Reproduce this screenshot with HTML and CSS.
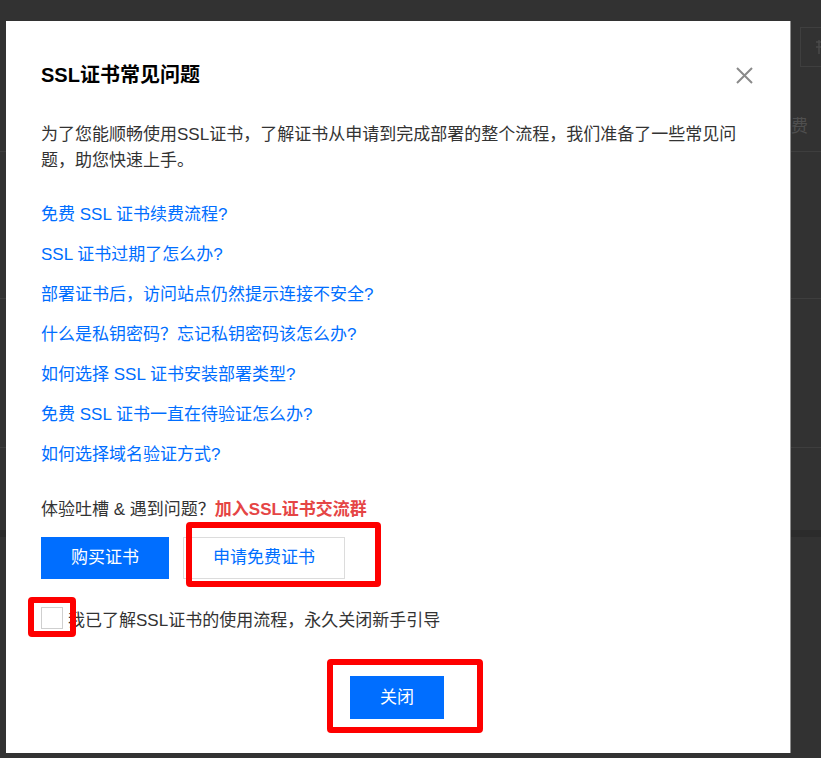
FILE: index.html
```html
<!DOCTYPE html>
<html lang="zh-CN">
<head>
<meta charset="utf-8">
<title>SSL证书常见问题</title>
<link rel="stylesheet" href="styles.css">
</head>
<body>
<div class="page">
  <div class="page-head">
    <div class="page-tool">
      <svg class="page-tool-icon" viewBox="0 0 8 16" aria-hidden="true">
        <path d="M1 3H8M4 1V15M1 8H8" stroke="#4a4a4a" stroke-width="1.5" fill="none"/>
      </svg>
    </div>
  </div>
  <div class="page-row row-a"><span class="page-cell">费</span></div>
  <div class="page-row row-b"></div>
  <div class="page-row row-c"></div>
  <div class="page-gap"></div>
  <div class="page-band"></div>
</div>

<div class="modal" role="dialog">
  <div class="modal-head">
    <h2 class="modal-title">SSL证书常见问题</h2>
    <svg class="close-icon" viewBox="0 0 17 17" aria-label="关闭">
      <path d="M1 1L16 16M16 1L1 16" stroke="#8a8a8a" stroke-width="2" fill="none"/>
    </svg>
  </div>
  <p class="intro">为了您能顺畅使用SSL证书，了解证书从申请到完成部署的整个流程，我们准备了一些常见问题，助您快速上手。</p>
  <ul class="faq">
    <li><a href="#">免费 SSL 证书续费流程?</a></li>
    <li><a href="#">SSL 证书过期了怎么办?</a></li>
    <li><a href="#">部署证书后，访问站点仍然提示连接不安全?</a></li>
    <li><a href="#">什么是私钥密码？忘记私钥密码该怎么办?</a></li>
    <li><a href="#">如何选择 SSL 证书安装部署类型?</a></li>
    <li><a href="#">免费 SSL 证书一直在待验证怎么办?</a></li>
    <li><a href="#">如何选择域名验证方式?</a></li>
  </ul>
  <p class="feedback">体验吐槽 &amp; 遇到问题？<strong>加入SSL证书交流群</strong></p>
  <div class="actions">
    <button class="btn btn-primary">购买证书</button>
    <button class="btn btn-default">申请免费证书</button>
  </div>
  <label class="agree"><span class="checkbox"></span>我已了解SSL证书的使用流程，永久关闭新手引导</label>
  <div class="footer">
    <button class="btn btn-primary btn-close">关闭</button>
  </div>
</div>

<div class="mark mark-free"></div>
<div class="mark mark-check"></div>
<div class="mark mark-close"></div>
</body>
</html>
```

FILE: styles.css
```css
* { box-sizing: border-box; }

html, body {
  margin: 0;
  padding: 0;
}

body {
  position: relative;
  width: 821px;
  height: 758px;
  overflow: hidden;
  background: #323232;
  font-family: "Liberation Sans", "Noto Sans CJK SC", sans-serif;
}

/* dimmed page behind the overlay */
.page {
  display: flex;
  flex-direction: column;
  width: 821px;
}

.page-head {
  height: 97px;
  display: flex;
  justify-content: flex-end;
  padding-top: 27px;
  margin-right: -40px;
}

.page-tool {
  width: 61px;
  height: 40px;
  border: 1px solid #3f3f3f;
  display: flex;
  align-items: center;
  padding-left: 14px;
}

.page-tool-icon {
  width: 8px;
  height: 16px;
}

.page-row {
  border-bottom: 1px solid #3e3e3e;
  display: flex;
  align-items: center;
  justify-content: flex-end;
}

.row-a { height: 55px; }
.row-b { height: 147px; }
.row-c { height: 149px; }
.page-gap { height: 82px; }
.page-band { height: 7px; background: #2b2b2b; }

.page-cell {
  color: #4f4f4f;
  font-size: 17px;
  padding-right: 13px;
}

/* modal */
.modal {
  position: absolute;
  left: 6px;
  top: 21px;
  width: 784px;
  height: 732px;
  background: #fff;
  padding: 40px 37px 34px 35px;
  display: flex;
  flex-direction: column;
  box-shadow: 1px 0 0 #8e8e8e;
}

.modal-head {
  display: flex;
  justify-content: space-between;
  align-items: center;
  height: 28px;
}

.modal-title {
  margin: 0;
  font-size: 20px;
  line-height: 28px;
  font-weight: bold;
  color: #000;
}

.close-icon {
  width: 17px;
  height: 17px;
}

.intro {
  margin: 33px 0 0;
  max-width: 704px;
  font-size: 17px;
  line-height: 26px;
  color: #333;
}

.faq {
  list-style: none;
  margin: 21px 0 0;
  padding: 0;
}

.faq a {
  display: block;
  font-size: 17px;
  line-height: 40px;
  color: #006eff;
  text-decoration: none;
}

.feedback {
  margin: 22px 0 0;
  font-size: 17px;
  line-height: 26px;
  color: #333;
}

.feedback strong {
  color: #e54545;
  font-weight: bold;
}

.actions {
  display: flex;
  gap: 14px;
  margin-top: 14px;
}

.btn {
  height: 42px;
  padding: 0 29px;
  border: 1px solid;
  border-radius: 0;
  font: inherit;
  font-size: 17px;
  line-height: 40px;
  cursor: pointer;
}

.btn-primary {
  background: #006eff;
  border-color: #006eff;
  color: #fff;
}

.btn-default {
  background: #fff;
  border-color: #dcdcdc;
  color: #006eff;
}

.agree {
  display: flex;
  align-items: center;
  height: 26px;
  margin-top: 26px;
  font-size: 17px;
  color: #333;
}

.checkbox {
  width: 22px;
  height: 22px;
  border: 1px solid #cfcfcf;
  background: #fff;
  margin-right: 5px;
  flex-shrink: 0;
}

.footer {
  display: flex;
  justify-content: center;
  margin-top: 45px;
}

.btn-close {
  height: 43px;
  line-height: 41px;
}

/* red annotation boxes drawn over the dialog */
.mark {
  position: absolute;
  border: 6px solid #fe0000;
  border-radius: 4px;
}

.mark-free { left: 186px; top: 522px; width: 195px; height: 65px; }
.mark-check { left: 28px; top: 597px; width: 48px; height: 40px; }
.mark-close { left: 327px; top: 659px; width: 156px; height: 74px; }
```
